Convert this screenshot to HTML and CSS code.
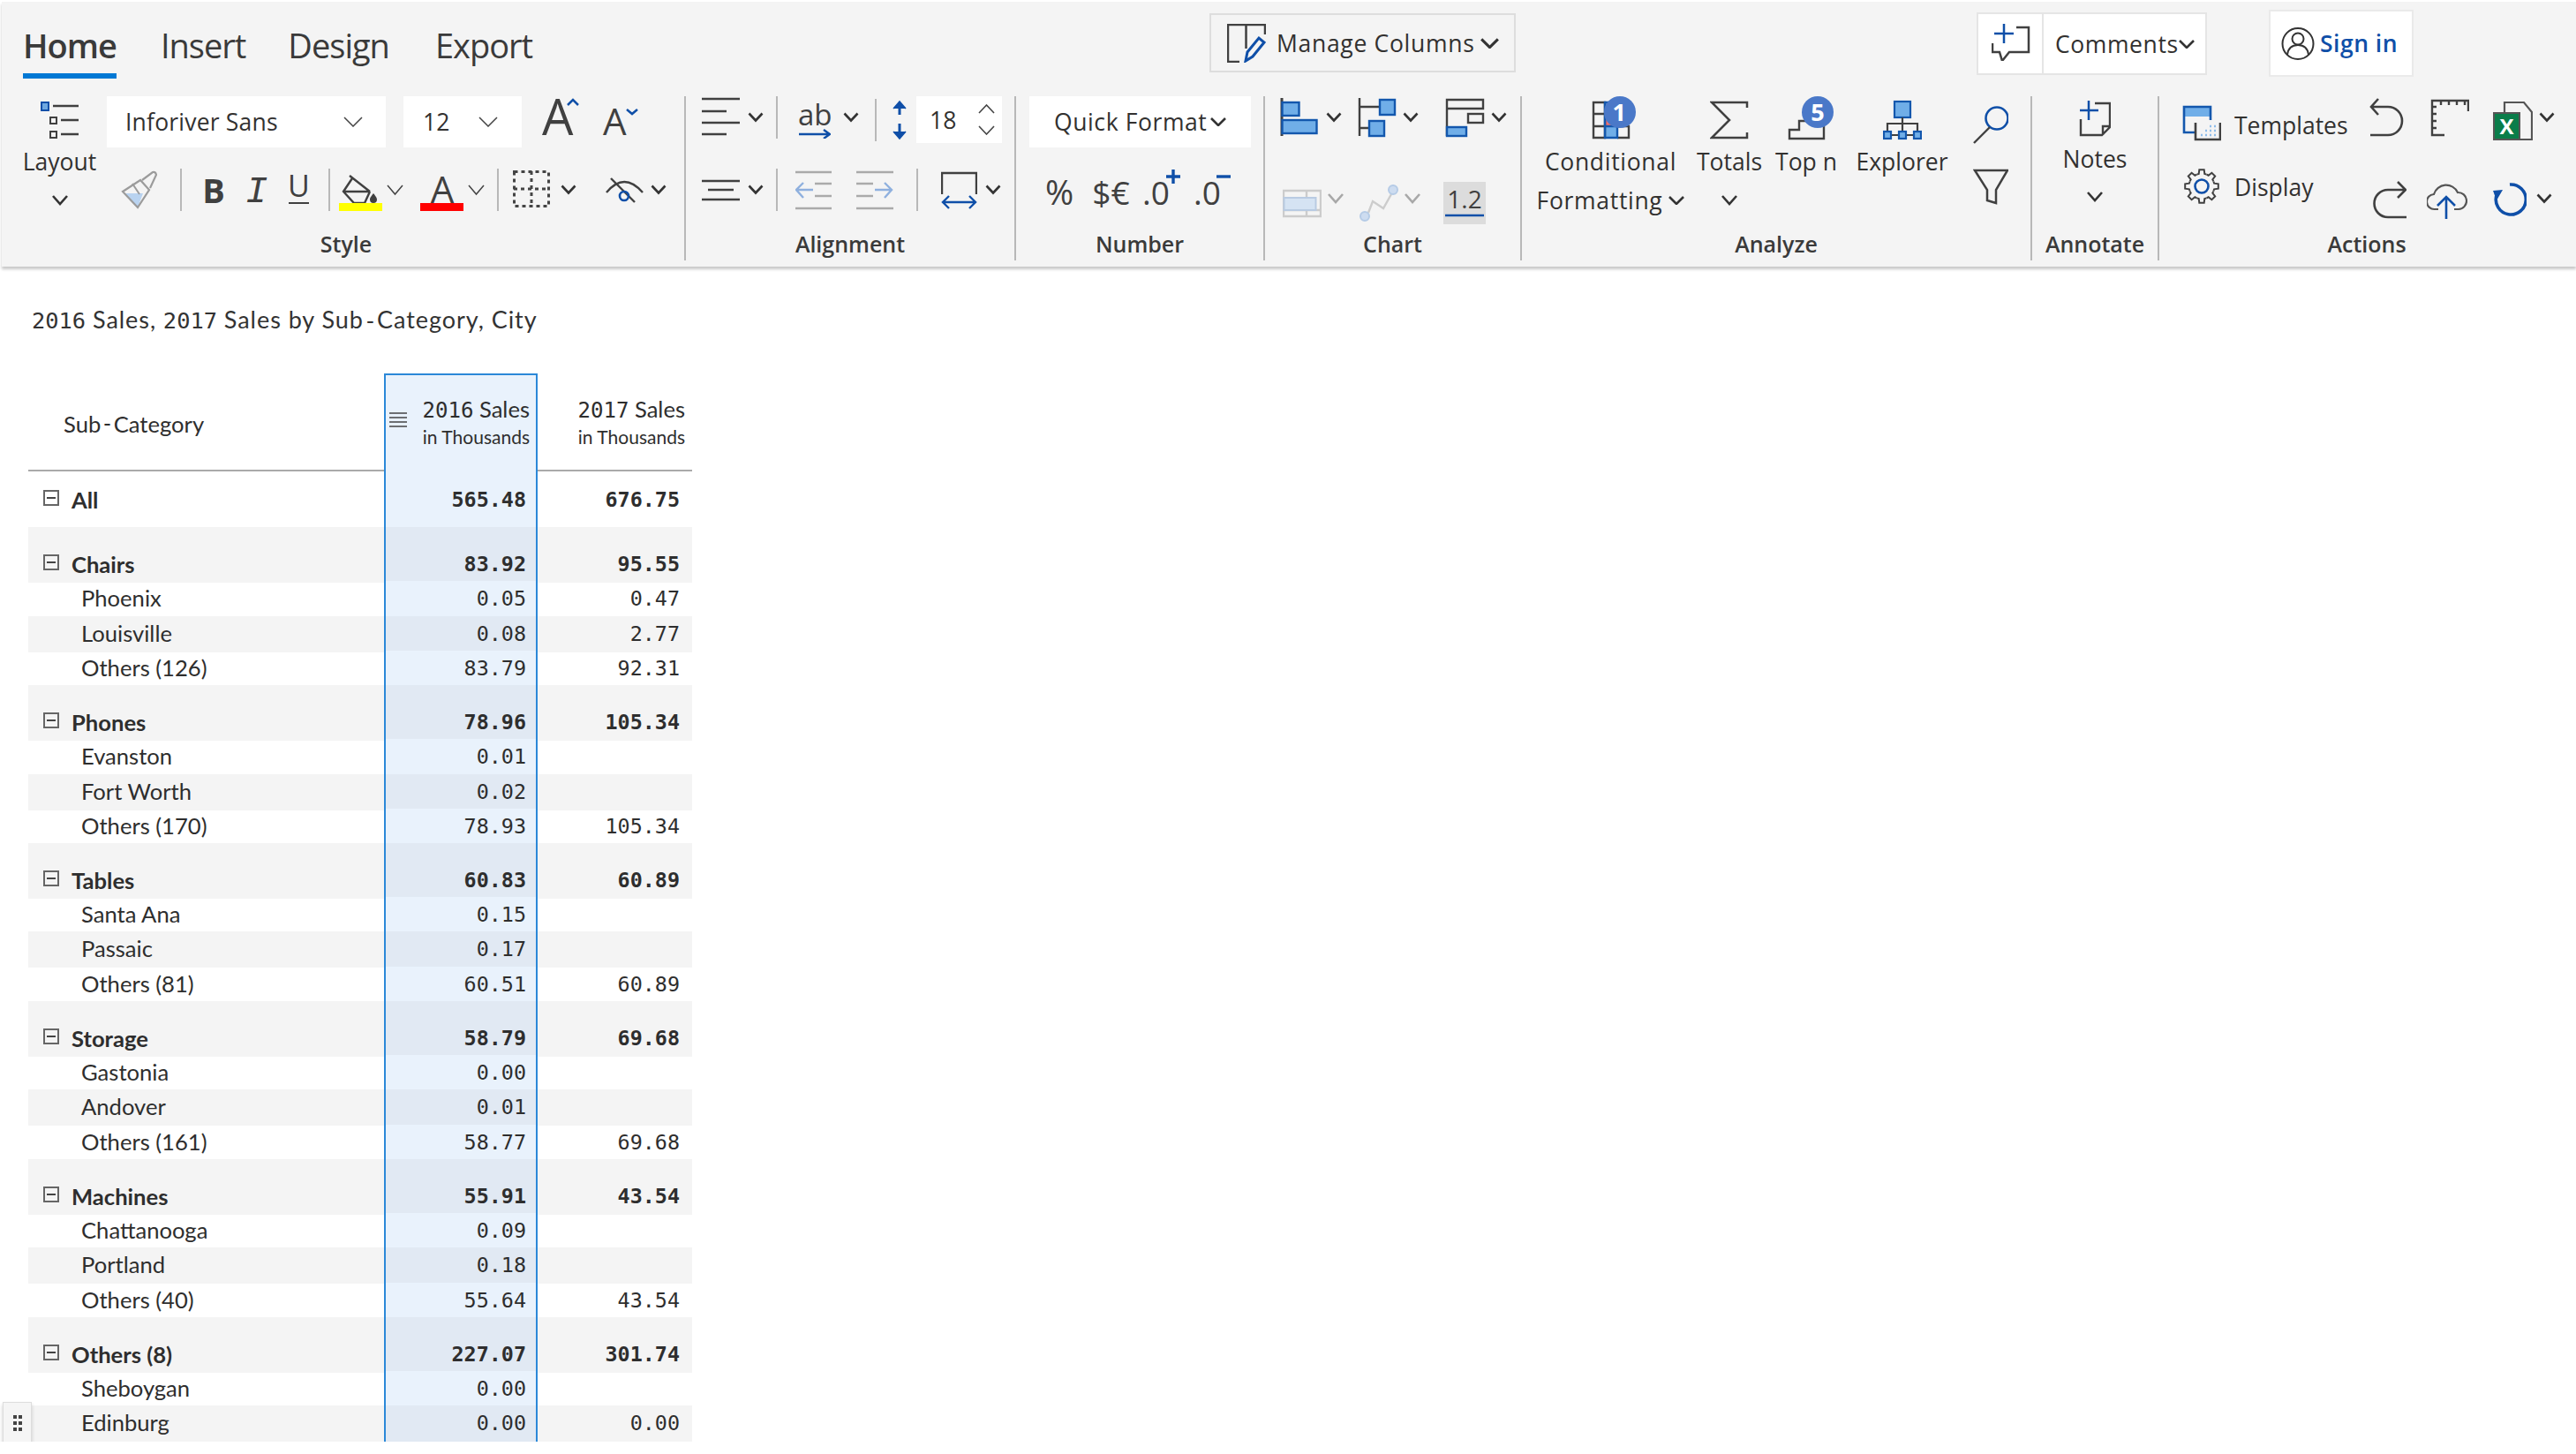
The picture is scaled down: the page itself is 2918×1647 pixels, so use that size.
FILE: index.html
```html
<!DOCTYPE html>
<html lang="en">
<head>
  <meta charset="UTF-8" />
  <title>Inforiver</title>
  <link rel="stylesheet" href="styles.css">
</head>
<body>
  <svg class="defs">
    <symbol id="cb" viewBox="0 0 18 48"><polyline points="1.5,19.5 9,27.5 16.5,19.5" fill="none" stroke="#333" stroke-width="2.6"/></symbol>
    <symbol id="ct" viewBox="0 0 19 48"><polyline points="1,19 9.5,29 18,19" fill="none" stroke="#444" stroke-width="1.5"/></symbol>
    <symbol id="cg" viewBox="0 0 18 48"><polyline points="1,19 9,28 17,19" fill="none" stroke="#a8a8a8" stroke-width="2.6"/></symbol>
    <symbol id="cs" viewBox="0 0 22 12"><polyline points="1,1 11,11 21,1" fill="none" stroke="#444" stroke-width="1.5"/></symbol>
    <symbol id="cm" viewBox="0 0 18 10"><polyline points="1,1 9,9 17,1" fill="none" stroke="#333" stroke-width="2.6"/></symbol>
  </svg>

  <div class="ribbon">
    <div class="topbar">
      <nav class="tabs">
        <a class="tab active">Home</a>
        <a class="tab tab-insert">Insert</a>
        <a class="tab tab-design">Design</a>
        <a class="tab tab-export">Export</a>
      </nav>
      <button class="manage">
        <svg width="44" height="44" viewBox="0 0 44 44"><path d="M14 43H1V1H43V12M21.5 1V28" fill="none" stroke="#404040" stroke-width="2.5"/><path d="M21 42l2-10 13-16 6 5-13 16z" fill="#f4f4f4" stroke="#0f4fa8" stroke-width="3"/></svg>
        <span>Manage Columns</span>
        <svg class="manage-chev" width="21" height="12"><use href="#cm"/></svg>
      </button>
      <div class="comments">
        <div class="comments-icon">
          <svg width="44" height="42" viewBox="0 0 44 42"><path d="M28 4H42V32H20L12 42L9 32H1V22" fill="none" stroke="#404040" stroke-width="2.5"/><path d="M14 0V22M3 11H25" stroke="#0f4fa8" stroke-width="2.5"/></svg>
        </div>
        <div class="comments-text"><span>Comments</span><svg width="18" height="10"><use href="#cm"/></svg></div>
      </div>
      <button class="signin">
        <svg width="38" height="39" viewBox="0 0 38 39"><circle cx="19" cy="19.5" r="17.5" fill="none" stroke="#333" stroke-width="2"/><circle cx="19" cy="14" r="6.5" fill="none" stroke="#333" stroke-width="2"/><path d="M7 32c1-8 6-11 12-11s11 3 12 11" fill="none" stroke="#333" stroke-width="2"/></svg>
        <span>Sign in</span>
      </button>
    </div>

    <div class="groups">
      <!-- style -->
      <section class="group g-style">
        <div class="group-body flexrow">
          <div class="bigcol layout-col">
            <svg class="bigicon" width="43" height="52" viewBox="0 0 43 52"><rect x="1" y="7" width="8" height="9" fill="#6fa8e0" stroke="#0f4fa8" stroke-width="2"/><path d="M14 11H43M23 27H43M23 43H43" stroke="#404040" stroke-width="2.5"/><rect x="11" y="24" width="7" height="7" fill="none" stroke="#404040" stroke-width="2"/><rect x="11" y="40" width="7" height="7" fill="none" stroke="#404040" stroke-width="2"/></svg>
            <span class="bigtext">Layout</span>
            <svg class="bigchev" width="18" height="44" viewBox="0 0 18 44"><polyline points="1,17 9,26 17,17" fill="none" stroke="#333" stroke-width="2.6"/></svg>
          </div>
          <div class="ml-11">
            <div class="tool-row top">
              <div class="field w-font"><span>Inforiver Sans</span><svg width="22" height="12"><use href="#cs"/></svg></div>
              <div class="field w-size ml-20"><span>12</span><svg width="22" height="12"><use href="#cs"/></svg></div>
              <div class="glw w-46 ml-22"><span class="gl a-big">A</span><svg class="deco" width="46" height="58" viewBox="0 0 46 58"><polyline points="30,10 36,4 42,10" fill="none" stroke="#0f4fa8" stroke-width="2.5"/></svg></div>
              <div class="glw w-44 ml-23"><span class="gl a-small">A</span><svg class="deco" width="44" height="58" viewBox="0 0 44 58"><polyline points="28,15 34,20 40,15" fill="none" stroke="#0f4fa8" stroke-width="2.5"/></svg></div>
            </div>
            <div class="tool-row bottom">
              <svg class="ml-16" width="44" height="48" viewBox="0 0 44 48"><path d="M5 28l20 0-6 16z" fill="#b9d3f0"/><path d="M2 26L22 13 32 24 19 44zM24 13l12-9q3-1 4 3l-7 15" fill="none" stroke="#9b9b9b" stroke-width="2.2"/><path d="M13 17l8 12" stroke="#9b9b9b" stroke-width="2"/></svg>
              <i class="vsep ml-23"></i>
              <span class="gl fmt-b ml-20">B</span>
              <span class="gl fmt-i ml-17">I</span>
              <div class="glw w-31 ml-17"><span class="gl fmt-u">U</span><svg class="deco" width="31" height="48" viewBox="0 0 31 48"><path d="M4 39H27" stroke="#404040" stroke-width="2"/></svg></div>
              <i class="vsep ml-18"></i>
              <svg class="ml-10" width="50" height="48" viewBox="0 0 50 48"><path d="M12 8L35 26M15 11L5 26L17 39H29L35 26M5 26H35" fill="none" stroke="#404040" stroke-width="2.4"/><path d="M39 28c3 4 4 5 4 7a4 4 0 0 1-8 0c0-2 1-3 4-7z" fill="#404040"/><rect y="39" width="49" height="9" fill="#ffff00"/></svg>
              <svg class="ml-4" width="19" height="48"><use href="#ct"/></svg>
              <div class="glw w-50 ml-19"><span class="gl a-red">A</span><svg class="deco" width="50" height="48" viewBox="0 0 50 48"><rect y="39" width="49" height="9" fill="#ff0000"/></svg></div>
              <svg class="ml-4" width="19" height="48"><use href="#ct"/></svg>
              <i class="vsep ml-14"></i>
              <svg class="ml-16" width="42" height="48" viewBox="0 0 42 48"><path d="M1.5 3.5H40.5V42.5H1.5ZM21 3V44M1 23H41" fill="none" stroke="#444" stroke-width="3" stroke-dasharray="4 4"/></svg>
              <svg class="ml-12" width="18" height="48"><use href="#cb"/></svg>
              <svg class="ml-33" width="43" height="48" viewBox="0 0 43 48"><path d="M1 27Q21 3 42 27" fill="none" stroke="#404040" stroke-width="2.4"/><path d="M6 11L33 38" stroke="#404040" stroke-width="2.4"/><circle cx="21" cy="31" r="5" fill="none" stroke="#0f4fa8" stroke-width="2.6"/></svg>
              <svg class="ml-8" width="18" height="48"><use href="#cb"/></svg>
            </div>
          </div>
        </div>
        <div class="group-label">Style</div>
      </section>

      <!-- alignment -->
      <section class="group g-align">
        <div class="group-body">
          <div class="tool-row top">
            <svg class="ml-18" width="43" height="48" viewBox="0 0 43 48"><path d="M0 3H43M0 17H28M0 30H43M0 43H28" stroke="#404040" stroke-width="2.6"/></svg>
            <svg class="ml-9" width="18" height="48"><use href="#cb"/></svg>
            <i class="vsep ml-14"></i>
            <div class="glw w-37 ml-23"><span class="gl ab">ab</span><svg class="deco" width="37" height="48" viewBox="0 0 37 48"><path d="M1 43H36M29 38L36 43L29 48" fill="none" stroke="#0f4fa8" stroke-width="2.4"/></svg></div>
            <svg class="ml-14" width="18" height="48"><use href="#cb"/></svg>
            <i class="vsep ml-18 down-3"></i>
            <svg class="ml-17" width="18" height="54" viewBox="0 0 18 54"><path d="M9 8V21M9 31V46" stroke="#0f4fa8" stroke-width="3"/><path d="M2 14L9 6L16 14M2 40L9 48L16 40" fill="#0f4fa8" stroke="#0f4fa8" stroke-width="1.5"/></svg>
            <div class="field w-spin ml-10"><span>18</span>
              <svg width="19" height="35" viewBox="0 0 19 35"><polyline points="1,10 9.5,1 18,10" fill="none" stroke="#444" stroke-width="1.6"/><polyline points="1,25 9.5,34 18,25" fill="none" stroke="#444" stroke-width="1.6"/></svg>
            </div>
          </div>
          <div class="tool-row bottom">
            <svg class="ml-18" width="43" height="48" viewBox="0 0 43 48"><path d="M0 14H43M7 24H36M0 35H43" stroke="#404040" stroke-width="2.6"/></svg>
            <svg class="ml-9" width="18" height="48"><use href="#cb"/></svg>
            <i class="vsep ml-14"></i>
            <svg class="ml-20" width="41" height="48" viewBox="0 0 41 48"><path d="M0 4H41M0 45H41M22 17H41M22 31H41" stroke="#aaa" stroke-width="2.6"/><path d="M1 24H20M9 16L1 24L9 33" fill="none" stroke="#8fb0de" stroke-width="2.4"/></svg>
            <svg class="ml-28" width="42" height="48" viewBox="0 0 42 48"><path d="M0 4H42M0 45H42M0 17H19M0 31H19" stroke="#aaa" stroke-width="2.6"/><path d="M21 24H40M32 16L40 24L32 33" fill="none" stroke="#8fb0de" stroke-width="2.4"/></svg>
            <i class="vsep ml-26"></i>
            <svg class="ml-26" width="41" height="48" viewBox="0 0 41 48"><path d="M1 29V5H40V29" fill="none" stroke="#404040" stroke-width="2.4"/><path d="M2 38H39M9 31L2 38L9 45M32 31L39 38L32 45" fill="none" stroke="#0f4fa8" stroke-width="2.4"/></svg>
            <svg class="ml-9" width="18" height="48"><use href="#cb"/></svg>
          </div>
        </div>
        <div class="group-label">Alignment</div>
      </section>

      <!-- number -->
      <section class="group g-number">
        <div class="group-body">
          <div class="tool-row top">
            <div class="field w-quick ml-15"><span>Quick Format</span><svg width="18" height="10"><use href="#cm"/></svg></div>
          </div>
          <div class="tool-row bottom">
            <span class="gl numfmt pct ml-32">%</span>
            <span class="gl numfmt cur ml-20">$€</span>
            <div class="glw w-44 ml-14"><span class="gl numfmt">.0</span><svg class="deco" width="44" height="48" viewBox="0 0 44 48"><path d="M35 1V17M27 9H43" stroke="#0f4fa8" stroke-width="3.4"/></svg></div>
            <div class="glw w-42 ml-14"><span class="gl numfmt">.0</span><svg class="deco" width="42" height="48" viewBox="0 0 42 48"><path d="M26 9H42" stroke="#0f4fa8" stroke-width="3.4"/></svg></div>
          </div>
        </div>
        <div class="group-label">Number</div>
      </section>

      <!-- chart -->
      <section class="group g-chart">
        <div class="group-body">
          <div class="tool-row top">
            <svg class="ml-17" width="45" height="48" viewBox="0 0 45 48"><path d="M2 2V45" stroke="#404040" stroke-width="3"/><rect x="2.5" y="7" width="19" height="15" fill="#70aee8" stroke="#1357ad" stroke-width="2.4"/><rect x="2.5" y="27" width="39" height="15" fill="#70aee8" stroke="#1357ad" stroke-width="2.4"/></svg>
            <svg class="ml-7" width="18" height="48"><use href="#cb"/></svg>
            <svg class="ml-18" width="44" height="48" viewBox="0 0 44 48"><path d="M2 2V45M2 12H25M2 36H13" fill="none" stroke="#404040" stroke-width="2.4"/><rect x="25" y="4" width="17" height="17" fill="#70aee8" stroke="#1357ad" stroke-width="2.4"/><rect x="13" y="28" width="17" height="17" fill="#70aee8" stroke="#1357ad" stroke-width="2.4"/></svg>
            <svg class="ml-7" width="18" height="48"><use href="#cb"/></svg>
            <svg class="ml-30" width="45" height="48" viewBox="0 0 45 48"><path d="M2 45V4H43V14H2" fill="none" stroke="#404040" stroke-width="2.4"/><rect x="26" y="20" width="17" height="10" fill="none" stroke="#404040" stroke-width="2.4"/><rect x="2" y="35" width="22" height="10" fill="#70aee8" stroke="#1357ad" stroke-width="2.4"/></svg>
            <svg class="ml-7" width="18" height="48"><use href="#cb"/></svg>
          </div>
          <div class="tool-row bottom">
            <svg class="ml-20" width="44" height="64" viewBox="0 0 44 64"><path d="M1 25H43V54H1ZM1 47H43M27 25V32M27 47V54" fill="none" stroke="#ccc" stroke-width="2.4"/><rect x="1.5" y="33" width="36" height="14" fill="#d5e3f3" stroke="#b9cbe2" stroke-width="2"/></svg>
            <svg class="ml-7 down-10" width="18" height="48"><use href="#cg"/></svg>
            <svg class="ml-18" width="44" height="64" viewBox="0 0 44 64"><polyline points="10,50 15,37 27,45 36,29" fill="none" stroke="#ccc" stroke-width="2.4"/><circle cx="6" cy="54" r="5" fill="#cddcf0" stroke="#b5cbe6" stroke-width="2"/><circle cx="38" cy="24" r="5" fill="#cddcf0" stroke="#b5cbe6" stroke-width="2"/></svg>
            <svg class="ml-7 down-10" width="18" height="48"><use href="#cg"/></svg>
            <div class="glw decimals ml-26"><span class="gl dec-text">1.2</span><svg class="deco" width="48" height="48" viewBox="0 0 48 48"><path d="M2 38H46" stroke="#0f4fa8" stroke-width="2.4"/></svg></div>
          </div>
        </div>
        <div class="group-label">Chart</div>
      </section>

      <!-- analyze -->
      <section class="group g-analyze">
        <div class="group-body flexrow">
          <div class="bigcol ml-14 w-cf">
            <div class="iconwrap">
              <svg width="60" height="52" viewBox="0 0 60 52"><rect x="23" y="34" width="14" height="14" fill="#70aee8"/><rect x="23" y="20" width="14" height="14" fill="#f07070"/><rect x="23" y="6" width="14" height="14" fill="#70aee8"/><path d="M10 7H23V47H10ZM10 20H23M10 34H23M37 34H50V47H37" fill="none" stroke="#404040" stroke-width="2.4"/><path d="M23 7H37V47H23ZM23 34H37" fill="none" stroke="#1357ad" stroke-width="2.4"/></svg>
              <span class="badge b-cf">1</span>
            </div>
            <span class="bigtext">Conditional</span>
            <span class="bigtext">Formatting<svg class="inline-chev" width="18" height="10"><use href="#cm"/></svg></span>
          </div>
          <div class="bigcol ml-4 w-totals">
            <svg class="bigicon" width="44" height="52" viewBox="0 0 44 52"><path d="M42 13V7H2L22 27L2 47H42V41" fill="none" stroke="#404040" stroke-width="2.5"/></svg>
            <span class="bigtext">Totals</span>
            <svg class="bigchev" width="18" height="44" viewBox="0 0 18 44"><polyline points="1,17 9,26 17,17" fill="none" stroke="#333" stroke-width="2.6"/></svg>
          </div>
          <div class="bigcol ml-2 w-topn">
            <div class="iconwrap">
              <svg width="60" height="52" viewBox="0 0 60 52"><path d="M11 48V38H22V28H50V48Z" fill="none" stroke="#404040" stroke-width="2.4"/></svg>
              <span class="badge b-top">5</span>
            </div>
            <span class="bigtext">Top n</span>
          </div>
          <div class="bigcol ml-10 w-explorer">
            <svg class="bigicon" width="44" height="52" viewBox="0 0 44 52"><rect x="13" y="6" width="18" height="18" fill="#70aee8" stroke="#1357ad" stroke-width="2.2"/><path d="M22 24V31M5 40V31H39V40M22 31V40M9 44H18M26 44H34" fill="none" stroke="#404040" stroke-width="2.2"/><rect x="1" y="40" width="8" height="8" fill="#70aee8" stroke="#1357ad" stroke-width="2.2"/><rect x="18" y="40" width="8" height="8" fill="#70aee8" stroke="#1357ad" stroke-width="2.2"/><rect x="35" y="40" width="8" height="8" fill="#70aee8" stroke="#1357ad" stroke-width="2.2"/></svg>
            <span class="bigtext">Explorer</span>
          </div>
          <div class="ml-23">
            <div class="tool-row top">
              <svg width="40" height="58" viewBox="0 0 40 58"><circle cx="27" cy="25" r="12.5" fill="none" stroke="#0f4fa8" stroke-width="2.6"/><path d="M19 35L1 53" stroke="#404040" stroke-width="2.4"/></svg>
            </div>
            <div class="tool-row bottom">
              <svg width="40" height="42" viewBox="0 0 40 42"><path d="M2 2H39L26 24V39L16 36V24Z" fill="none" stroke="#404040" stroke-width="2.5"/></svg>
            </div>
          </div>
        </div>
        <div class="group-label">Analyze</div>
      </section>

      <!-- annotate -->
      <section class="group g-annotate">
        <div class="group-body">
          <div class="bigcol notes-col">
            <svg class="bigicon" width="36" height="46" viewBox="0 0 36 46"><path d="M18 8H35V35L26 44H2V26M35 34H27V44" fill="none" stroke="#404040" stroke-width="2.4"/><path d="M11 5V27M1 16H22" stroke="#0f4fa8" stroke-width="2.5"/></svg>
            <span class="bigtext">Notes</span>
            <svg class="bigchev" width="18" height="44" viewBox="0 0 18 44"><polyline points="1,19 9,28 17,19" fill="none" stroke="#333" stroke-width="2.6"/></svg>
          </div>
        </div>
        <div class="group-label">Annotate</div>
      </section>

      <!-- actions -->
      <section class="group g-actions">
        <div class="group-body">
          <div class="tool-row top">
            <svg class="ml-26" width="44" height="58" viewBox="0 0 44 58"><rect x="2" y="12" width="30" height="11" fill="#70aee8"/><path d="M14 41H2V12H32V27" fill="none" stroke="#1357ad" stroke-width="2.6"/><path d="M15 30V49H43V30" fill="none" stroke="#404040" stroke-width="2.6"/><path d="M21 44h2M26 44h2M31 44h2M36 44h2M26 39h2M31 39h2M36 39h2M31 34h2M36 34h2" stroke="#8fbdea" stroke-width="2.4"/></svg>
            <span class="action-text t-first ml-15">Templates</span>
            <svg class="ml-26" width="42" height="58" viewBox="0 0 42 58"><path d="M2 12H21A16 16 0 0 1 21 44H1M10 3L2 12L10 21" fill="none" stroke="#404040" stroke-width="2.6"/></svg>
            <svg class="ml-27" width="44" height="58" viewBox="0 0 44 58"><path d="M43 17V5H2V44H16M12 5V10M21 5V10M30 5V10M39 5V10M2 12H7M2 20H7M2 28H7M2 36H7" fill="none" stroke="#404040" stroke-width="2.4"/></svg>
            <div class="iconwrap excel ml-27">
              <svg width="45" height="58" viewBox="0 0 45 58"><path d="M13 19V7H35L44 18V49H30" fill="#f4f4f4" stroke="#555" stroke-width="2.2"/><rect x="1" y="19" width="29" height="30" fill="#0a7d4a" stroke="#555" stroke-width="2"/></svg>
              <span class="excel-x">X</span>
            </div>
            <svg class="ml-7" width="18" height="48"><use href="#cb"/></svg>
          </div>
          <div class="tool-row bottom">
            <svg class="ml-28" width="40" height="42" viewBox="0 0 40 42">
              <defs><polyline id="tooth" points="-5.5,-13.4 -3.3,-14.1 -2.7,-18.8 2.7,-18.8 3.3,-14.1 5.5,-13.4" fill="none" stroke="#404040" stroke-width="2"/></defs>
              <g transform="translate(20 20)"><use href="#tooth"/><use href="#tooth" transform="rotate(45)"/><use href="#tooth" transform="rotate(90)"/><use href="#tooth" transform="rotate(135)"/><use href="#tooth" transform="rotate(180)"/><use href="#tooth" transform="rotate(225)"/><use href="#tooth" transform="rotate(270)"/><use href="#tooth" transform="rotate(315)"/></g>
              <circle cx="20" cy="20" r="7.5" fill="none" stroke="#0f4fa8" stroke-width="2.6"/>
            </svg>
            <span class="action-text t-second ml-17">Display</span>
            <svg class="ml-26" width="42" height="58" viewBox="0 0 42 58"><path d="M40 24H21A15.5 15.5 0 0 0 21 55H42M32 15L41 24L32 33" fill="none" stroke="#404040" stroke-width="2.6"/></svg>
            <svg class="ml-23" width="46" height="58" viewBox="0 0 46 58"><path d="M13 46H9A8.5 8.5 0 0 1 8 29A14.5 14.5 0 0 1 35 27A9.5 9.5 0 0 1 36 46H31" fill="none" stroke="#555" stroke-width="2.2"/><path d="M22 33V57M12 42L22 32L32 42" fill="none" stroke="#0f4fa8" stroke-width="2.6"/></svg>
            <svg class="ml-29" width="38" height="58" viewBox="0 0 38 58"><path d="M19 18A17 17 0 1 1 4 30" fill="none" stroke="#0f4fa8" stroke-width="3.6"/><path d="M0 25L11 24L4 36Z" fill="#0f4fa8"/></svg>
            <svg class="ml-11 down-10" width="18" height="48"><use href="#cb"/></svg>
          </div>
        </div>
        <div class="group-label">Actions</div>
      </section>
    </div>
  </div>

  <h2 class="title"><b class="mono">2016</b> Sales, <b class="mono">2017</b> Sales by Sub<b class="mono">-</b>Category, City</h2>

  <div class="report">
    <div class="row head">
      <div class="c name">Sub<b class="mono">-</b>Category</div>
      <div class="c val hl">
        <svg class="col-menu" width="20" height="17" viewBox="0 0 20 17"><path d="M0 1H20M0 6H20M0 11H20M0 16H20" stroke="#444" stroke-width="1.4"/></svg>
        <div><b class="mono">2016</b> Sales</div><small>in Thousands</small>
      </div>
      <div class="c val"><div><b class="mono">2017</b> Sales</div><small>in Thousands</small></div>
    </div>

    <div class="row total"><div class="c name"><i class="minus"></i>All</div><div class="c num hl">565.48</div><div class="c num">676.75</div></div>

    <div class="row group-row"><div class="c name"><i class="minus"></i>Chairs</div><div class="c num hl">83.92</div><div class="c num">95.55</div></div>
    <div class="row"><div class="c name child">Phoenix</div><div class="c num hl">0.05</div><div class="c num">0.47</div></div>
    <div class="row even"><div class="c name child">Louisville</div><div class="c num hl">0.08</div><div class="c num">2.77</div></div>
    <div class="row"><div class="c name child">Others (126)</div><div class="c num hl">83.79</div><div class="c num">92.31</div></div>

    <div class="row group-row"><div class="c name"><i class="minus"></i>Phones</div><div class="c num hl">78.96</div><div class="c num">105.34</div></div>
    <div class="row"><div class="c name child">Evanston</div><div class="c num hl">0.01</div><div class="c num"></div></div>
    <div class="row even"><div class="c name child">Fort Worth</div><div class="c num hl">0.02</div><div class="c num"></div></div>
    <div class="row"><div class="c name child">Others (170)</div><div class="c num hl">78.93</div><div class="c num">105.34</div></div>

    <div class="row group-row"><div class="c name"><i class="minus"></i>Tables</div><div class="c num hl">60.83</div><div class="c num">60.89</div></div>
    <div class="row"><div class="c name child">Santa Ana</div><div class="c num hl">0.15</div><div class="c num"></div></div>
    <div class="row even"><div class="c name child">Passaic</div><div class="c num hl">0.17</div><div class="c num"></div></div>
    <div class="row"><div class="c name child">Others (81)</div><div class="c num hl">60.51</div><div class="c num">60.89</div></div>

    <div class="row group-row"><div class="c name"><i class="minus"></i>Storage</div><div class="c num hl">58.79</div><div class="c num">69.68</div></div>
    <div class="row"><div class="c name child">Gastonia</div><div class="c num hl">0.00</div><div class="c num"></div></div>
    <div class="row even"><div class="c name child">Andover</div><div class="c num hl">0.01</div><div class="c num"></div></div>
    <div class="row"><div class="c name child">Others (161)</div><div class="c num hl">58.77</div><div class="c num">69.68</div></div>

    <div class="row group-row"><div class="c name"><i class="minus"></i>Machines</div><div class="c num hl">55.91</div><div class="c num">43.54</div></div>
    <div class="row"><div class="c name child">Chattanooga</div><div class="c num hl">0.09</div><div class="c num"></div></div>
    <div class="row even"><div class="c name child">Portland</div><div class="c num hl">0.18</div><div class="c num"></div></div>
    <div class="row"><div class="c name child">Others (40)</div><div class="c num hl">55.64</div><div class="c num">43.54</div></div>

    <div class="row group-row"><div class="c name"><i class="minus"></i>Others (8)</div><div class="c num hl">227.07</div><div class="c num">301.74</div></div>
    <div class="row"><div class="c name child">Sheboygan</div><div class="c num hl">0.00</div><div class="c num"></div></div>
    <div class="row even last"><div class="c name child">Edinburg</div><div class="c num hl">0.00</div><div class="c num">0.00</div></div>
  </div>

  <div class="handle">
    <svg width="10" height="18" viewBox="0 0 10 18"><path d="M0 0h4v4H0zM6 0h4v4H6zM0 7h4v4H0zM6 7h4v4H6zM0 14h4v4H0zM6 14h4v4H6z" fill="#444"/></svg>
  </div>
</body>
</html>
```

FILE: styles.css
```css
* {
  margin: 0;
  padding: 0;
  box-sizing: border-box;
}
body {
  background: #fff;
  color: #323130;
  font-family: "Open Sans", sans-serif;
  font-size: 26.5px;
  position: relative;
}
svg {
  display: block;
  flex: none;
}
.defs {
  display: none;
}

/* margins used to space the ribbon tools */
.ml-2 { margin-left: 2px; }
.ml-4 { margin-left: 4px; }
.ml-7 { margin-left: 7px; }
.ml-8 { margin-left: 8px; }
.ml-9 { margin-left: 9px; }
.ml-10 { margin-left: 10px; }
.ml-11 { margin-left: 11px; }
.ml-12 { margin-left: 12px; }
.ml-14 { margin-left: 14px; }
.ml-15 { margin-left: 15px; }
.ml-16 { margin-left: 16px; }
.ml-17 { margin-left: 17px; }
.ml-18 { margin-left: 18px; }
.ml-19 { margin-left: 19px; }
.ml-20 { margin-left: 20px; }
.ml-22 { margin-left: 22px; }
.ml-23 { margin-left: 23px; }
.ml-26 { margin-left: 26px; }
.ml-27 { margin-left: 27px; }
.ml-28 { margin-left: 28px; }
.ml-29 { margin-left: 29px; }
.ml-30 { margin-left: 30px; }
.ml-32 { margin-left: 32px; }
.ml-33 { margin-left: 33px; }
.down-3 { margin-top: 3px; }
.down-10 { margin-top: 10px; }
.w-31 { width: 31px; }
.w-37 { width: 37px; }
.w-42 { width: 42px; }
.w-44 { width: 44px; }
.w-46 { width: 46px; }
.w-50 { width: 50px; }

/* letters used as toolbar icons, line-height sets the baseline */
.glw {
  position: relative;
  flex: none;
}
.deco {
  position: absolute;
  left: 0;
  top: 0;
}
.gl {
  display: block;
  flex: none;
  color: #404040;
  white-space: nowrap;
}
.a-big { font-size: 56px; line-height: 44.5px; padding-left: 1px; }
.a-small { font-size: 42px; line-height: 55.4px; padding-left: 1px; }
.a-red { font-size: 42px; line-height: 45.4px; text-align: center; }
.fmt-b { width: 32px; font-size: 38px; font-weight: 700; line-height: 48.5px; text-align: center; }
.fmt-i {
  width: 31px;
  font-family: "Liberation Mono", monospace;
  font-style: italic;
  font-size: 42px;
  line-height: 55.6px;
  text-align: center;
}
.fmt-u { font-size: 34px; line-height: 39.6px; text-align: center; }
.ab { font-size: 33px; line-height: 42.4px; }
.numfmt { font-size: 37px; line-height: 53.3px; }
.pct { width: 34px; font-size: 39px; line-height: 51.7px; text-align: center; }
.cur { width: 43px; text-align: center; }
.decimals {
  margin-top: 15px;
  width: 48px;
  height: 48px;
  background: #dcdcdc;
}
.dec-text { font-size: 28px; line-height: 38.3px; text-align: center; }

.iconwrap {
  position: relative;
  width: 60px;
  height: 52px;
  flex: none;
}
.badge {
  position: absolute;
  top: 0;
  width: 36px;
  height: 36px;
  border-radius: 50%;
  background: #4a78c8;
  color: #fff;
  font-size: 27px;
  font-weight: 700;
  line-height: 36px;
  text-align: center;
}
.b-cf { left: 22px; }
.b-top { left: 25px; }
.excel {
  width: 45px;
  height: 58px;
}
.excel-x {
  position: absolute;
  left: 1px;
  top: 19px;
  width: 29px;
  color: #fff;
  font-size: 24px;
  font-weight: 700;
  line-height: 30px;
  text-align: center;
}

/* ribbon */
.ribbon {
  margin: 2px 0 0 2px;
  height: 300px;
  background: #f4f4f4;
  box-shadow: 0 3px 3px #c8c8c8;
}
.topbar {
  height: 107px;
  display: flex;
  align-items: flex-start;
}
.tabs {
  width: 1368px;
  display: flex;
  padding-left: 24px;
}
.tab {
  height: 87px;
  padding-top: 23px;
  font-size: 38px;
  line-height: 52px;
  letter-spacing: -1px;
  color: #3a3a3a;
}
.tab.active {
  border-bottom: 6px solid #0078d4;
  font-weight: 600;
  letter-spacing: -1px;
}
.tab-insert { margin-left: 50px; }
.tab-design { margin-left: 48px; }
.tab-export { margin-left: 52px; }

.manage {
  margin-top: 13px;
  width: 347px;
  height: 67px;
  display: flex;
  align-items: center;
  padding-left: 18px;
  background: transparent;
  border: 2px solid #ddd;
  font: inherit;
  color: inherit;
}
.manage span { margin-left: 12px; letter-spacing: 0.7px; }
.manage-chev { margin-left: 7px; }

.comments {
  margin: 12px 0 0 522px;
  width: 261px;
  height: 71px;
  display: flex;
  background: #fff;
  border: 2px solid #e5e5e5;
}
.comments-icon {
  width: 74px;
  padding: 11px 0 0 15px;
  border-right: 2px solid #e5e5e5;
}
.comments-text {
  display: flex;
  align-items: center;
  padding-left: 13px;
  letter-spacing: 0.6px;
}
.signin {
  margin: 9px 0 0 70px;
  width: 164px;
  height: 76px;
  display: flex;
  align-items: center;
  padding-left: 12px;
  background: #fff;
  border: 2px solid #eaeaea;
  font: inherit;
  font-weight: 600;
  color: #0f4fa8;
  letter-spacing: 0.5px;
}
.signin span { margin-left: 6px; }

.groups {
  display: flex;
  height: 186px;
}
.group {
  height: 186px;
  border-right: 2px solid #b8b8b8;
  flex: none;
}
.g-style { width: 775px; }
.g-align { width: 374px; }
.g-number { width: 282px; }
.g-chart { width: 291px; }
.g-analyze { width: 578px; }
.g-annotate { width: 144px; }
.g-actions { width: 470px; border-right: 0; }
.g-style .group-label { padding-left: 7px; }

.group-body {
  height: 149px;
}
.flexrow {
  display: flex;
}
.group-label {
  height: 36px;
  line-height: 36px;
  font-size: 25px;
  font-weight: 600;
  text-align: center;
  color: #3a3a3a;
}
.tool-row {
  display: flex;
  align-items: flex-start;
}
.tool-row.top {
  height: 58px;
  margin-bottom: 24px;
}
.tool-row.bottom {
  height: 67px;
}
.vsep {
  display: block;
  flex: none;
  width: 2px;
  height: 48px;
  background: #b8b8b8;
}

.field {
  height: 58px;
  background: #fff;
  display: flex;
  align-items: center;
  justify-content: space-between;
  flex: none;
}
.w-font { width: 316px; padding: 0 26px 0 21px; letter-spacing: 0.2px; }
.w-size { width: 134px; padding: 0 27px 0 22px; }
.w-spin { width: 97px; height: 53px; padding: 0 8px 0 15px; }
.w-quick { width: 251px; padding: 0 28px; letter-spacing: 0.6px; }

.bigcol {
  display: flex;
  flex-direction: column;
  align-items: center;
  flex: none;
}
.bigtext {
  display: flex;
  align-items: center;
  height: 44px;
  line-height: 44px;
  white-space: nowrap;
}
.inline-chev { margin-left: 7px; }
.layout-col { margin-left: 23px; width: 85px; }
.w-cf { width: 173px; letter-spacing: 0.7px; }
.w-totals { width: 88px; }
.w-topn { width: 82px; }
.w-explorer { width: 115px; }
.notes-col .bigicon { height: 46px; margin-bottom: 6px; }
.notes-col .bigtext { height: 38px; line-height: 38px; }

.action-text {
  width: 127px;
  flex: none;
}
.t-first { line-height: 66px; }
.t-second { line-height: 42px; }

/* report */
.title {
  margin: 40px 0 41px 36px;
  height: 40px;
  line-height: 40px;
  font-family: Lato, sans-serif;
  font-size: 27px;
  font-weight: 400;
  letter-spacing: 0.95px;
  color: #333;
}
.mono {
  font-family: "DejaVu Sans Mono", monospace;
  font-weight: inherit;
  font-size: 0.94em;
  letter-spacing: 0;
}
.report {
  margin-left: 32px;
  width: 752px;
  font-family: Lato, sans-serif;
  font-size: 25.6px;
  color: #2e2e2e;
}
.row {
  display: grid;
  grid-template-columns: 403px 174px 175px;
  height: 39.2px;
  line-height: 39px;
}
.c {
  min-width: 0;
}
.name {
  display: flex;
  align-items: center;
  padding-left: 17px;
}
.child {
  padding-left: 60px;
  padding-bottom: 2px;
}
.num {
  font-family: "DejaVu Sans Mono", monospace;
  font-size: 23.4px;
  line-height: 41px;
  text-align: right;
  padding-right: 14px;
}
.hl {
  background: #e9f2fc;
  border-left: 2px solid #2b88d8;
  border-right: 2px solid #2b88d8;
}
.num.hl {
  padding-right: 11px;
}
.even .c, .group-row .c {
  background: #f4f4f4;
}
.even .hl, .group-row .hl {
  background: #e1e9f3;
}
.group-row, .total {
  font-weight: 700;
}
.group-row {
  height: 61.4px;
}
.group-row .c {
  padding-top: 22.4px;
}
.group-row .name {
  padding-bottom: 1px;
}
.total {
  height: 63px;
  line-height: 63px;
}
.total .num {
  line-height: 65px;
}
.minus {
  display: block;
  flex: none;
  position: relative;
  width: 18px;
  height: 18px;
  margin-right: 14px;
  margin-bottom: 5px;
  border: 2px solid #666;
}
.minus::after {
  content: "";
  position: absolute;
  left: 2px;
  right: 2px;
  top: 6px;
  height: 2px;
  background: #444;
}
.head {
  height: 111px;
  line-height: 30px;
  border-bottom: 2px solid #aaa;
}
.head .name {
  padding-left: 40px;
  padding-top: 5px;
}
.val {
  position: relative;
  text-align: right;
  padding: 25px 7px 0 0;
  margin-bottom: -2px;
}
.head .val:last-child {
  padding-right: 8px;
}
.head .hl {
  border-top: 2px solid #2b88d8;
  padding-top: 23px;
}
.val small {
  display: block;
  font-size: 21px;
}
.col-menu {
  position: absolute;
  left: 4px;
  top: 42px;
}
.last {
  height: 40.2px;
  border-bottom: 2px solid #aaa;
}
.last .hl {
  border-bottom: 2px solid #2b88d8;
  margin-bottom: -2px;
}

.handle {
  position: absolute;
  left: 3px;
  top: 1588px;
  width: 33px;
  height: 47px;
  display: flex;
  align-items: center;
  justify-content: center;
  background: #f5f5f5;
  border: 1px solid #ddd;
  box-shadow: 0 3px 4px #ccc;
}
```
